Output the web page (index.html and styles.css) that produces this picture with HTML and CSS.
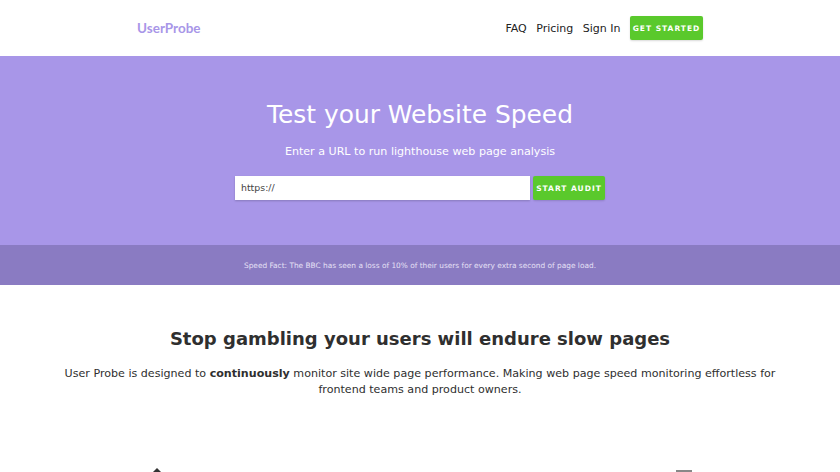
FILE: index.html
```html
<!DOCTYPE html>
<html lang="en">
<head>
<meta charset="UTF-8">
<meta name="viewport" content="width=device-width, initial-scale=1.0">
<title>UserProbe</title>
<link rel="stylesheet" href="styles.css">
</head>
<body>

<nav class="navbar">
  <a class="logo" href="#">UserProbe</a>
  <div class="nav-links">
    <a href="#">FAQ</a>
    <a href="#">Pricing</a>
    <a href="#">Sign In</a>
    <a class="btn btn-nav" href="#">GET STARTED</a>
  </div>
</nav>

<section class="hero">
  <h1>Test your Website Speed</h1>
  <p>Enter a URL to run lighthouse web page analysis</p>
  <form class="audit-form">
    <input type="text" value="https://">
    <button class="btn btn-audit" type="button">START AUDIT</button>
  </form>
</section>

<div class="fact">Speed Fact: The BBC has seen a loss of 10% of their users for every extra second of page load.</div>

<section class="intro">
  <h2>Stop gambling your users will endure slow pages</h2>
  <p>User Probe is designed to <strong>continuously</strong> monitor site wide page performance. Making web page speed monitoring effortless for frontend teams and product owners.</p>
</section>

<section class="features">
  <svg class="icon-left" width="12" height="6" viewBox="0 0 12 6"><path d="M6 0L10 4H2z" fill="#333"/></svg>
  <svg class="icon-right" width="16" height="4" viewBox="0 0 16 4"><rect y="2" width="16" height="2" fill="#888"/></svg>
</section>

</body>
</html>
```

FILE: styles.css
```css
html, body {
  height: 472px;
  overflow: hidden;
}
body {
  font-family: "DejaVu Sans", sans-serif;
  margin: 0;
  padding: 0;
  background: #fff;
  color: #2f2f2f;
}
a {
  text-decoration: none;
  color: inherit;
}
.navbar {
  height: 56px;
  box-sizing: border-box;
  padding: 0 137px;
  display: flex;
  justify-content: space-between;
  align-items: center;
}
.logo {
  font-family: Lato, sans-serif;
  font-weight: 700;
  font-size: 13.5px;
  color: #a896e8;
}
.nav-links {
  display: flex;
  align-items: center;
  gap: 9.5px;
  font-size: 11px;
  color: #222;
}
.btn {
  background: #5ac92c;
  color: #fff;
  font-family: "DejaVu Sans", sans-serif;
  font-weight: 700;
  font-size: 7.5px;
  letter-spacing: 1px;
  border: none;
  border-radius: 2px;
  box-shadow: 0 1px 2px rgba(0, 0, 0, 0.15);
  display: flex;
  align-items: center;
  justify-content: center;
}
.btn-nav {
  width: 73px;
  height: 24px;
}
.hero {
  height: 189px;
  box-sizing: border-box;
  background: #a896e8;
  color: #fff;
  padding-top: 42px;
  text-align: center;
}
.hero h1 {
  margin: 0;
  font-weight: 400;
  font-size: 24.9px;
  line-height: 34px;
}
.hero p {
  margin: 11px 0 0;
  font-size: 11.1px;
  line-height: 18px;
}
.audit-form {
  display: flex;
  justify-content: center;
  gap: 3px;
  margin-top: 15px;
}
.audit-form input {
  width: 295px;
  height: 24px;
  box-sizing: border-box;
  border: none;
  padding: 0 6px 2px;
  font-family: "DejaVu Sans", sans-serif;
  font-size: 9.4px;
  color: #444;
  box-shadow: 0 1px 2px rgba(0, 0, 0, 0.2);
}
.btn-audit {
  width: 72px;
  height: 24px;
  padding: 0;
}
.fact {
  height: 40px;
  background: #8a7bc2;
  color: #e6e1f6;
  font-size: 7.4px;
  display: flex;
  align-items: center;
  justify-content: center;
}
.intro {
  padding: 42px 60px 0;
  text-align: center;
}
.intro h2 {
  margin: 0;
  font-size: 18px;
  line-height: 24px;
}
.intro p {
  margin: 15px 0 0;
  font-size: 11.1px;
  line-height: 16px;
}
.features {
  position: relative;
}
.icon-left {
  position: absolute;
  left: 151px;
  top: 70px;
}
.icon-right {
  position: absolute;
  left: 676px;
  top: 70px;
}
```
